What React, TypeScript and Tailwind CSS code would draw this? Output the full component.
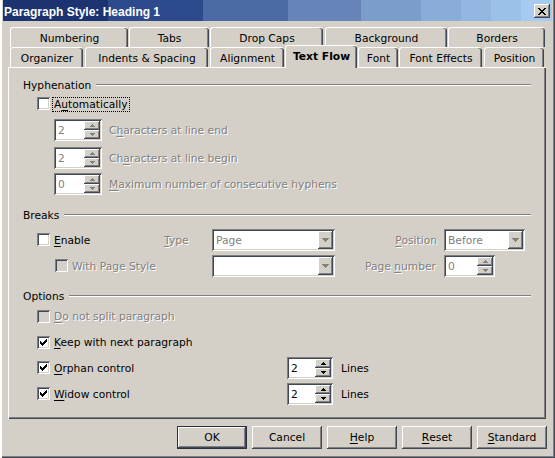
import React from 'react';

const CHECK: [number, number][] = [
  [6, 0], [5, 1], [6, 1], [0, 2], [4, 2], [5, 2], [6, 2], [0, 3], [1, 3], [3, 3], [4, 3], [5, 3],
  [0, 4], [1, 4], [2, 4], [3, 4], [4, 4], [1, 5], [2, 5], [3, 5], [2, 6],
];

const CLOSE: [number, number][] = [
  [0, 0], [1, 0], [6, 0], [7, 0], [1, 1], [2, 1], [5, 1], [6, 1], [2, 2], [3, 2], [4, 2], [5, 2],
  [3, 3], [4, 3], [2, 4], [3, 4], [4, 4], [5, 4], [1, 5], [2, 5], [5, 5], [6, 5], [0, 6], [1, 6], [6, 6], [7, 6],
];

const Pixels = ({ dots, w, h, color = '#000' }: { dots: [number, number][]; w: number; h: number; color?: string }) => (
  <svg width={w} height={h} viewBox={`0 0 ${w} ${h}`} shapeRendering="crispEdges">
    {dots.map(([x, y]) => (
      <rect key={`${x}-${y}`} x={x} y={y} width={1} height={1} fill={color} />
    ))}
  </svg>
);

const U = ({ children }: { children: React.ReactNode }) => (
  <span className="underline underline-offset-[2px]">{children}</span>
);

const raised = 'shadow-[inset_-1px_-1px_0_#404858,inset_1px_1px_0_#fff,inset_-2px_-2px_0_#808080]';
const sunken = 'shadow-[inset_1px_1px_0_#808080,inset_-1px_-1px_0_#fff,inset_2px_2px_0_#404858,inset_-2px_-2px_0_#d4d0c8]';
const dim = 'text-[#808080] [text-shadow:1px_1px_0_#fff]';
// labels sit a pixel lower than the flex centre would put them
const lbl = 'pt-[2px]';

const CheckBox = ({ checked = false, disabled = false }: { checked?: boolean; disabled?: boolean }) => (
  <span
    className={`flex h-[13px] w-[13px] shrink-0 items-center justify-center ${disabled ? 'bg-[#d4d0c8]' : 'bg-white'} ${sunken}`}
  >
    {checked && <Pixels dots={CHECK} w={7} h={7} />}
  </span>
);

const Arrow = ({ up = false, disabled = false }: { up?: boolean; disabled?: boolean }) => (
  <svg width="5" height="3" viewBox="0 0 5 3" shapeRendering="crispEdges">
    <polygon points={up ? '2.5,0 5,3 0,3' : '0,0 5,0 2.5,3'} fill={disabled ? '#808080' : '#000'} />
  </svg>
);

const Spin = ({ value, width, disabled = false }: { value: string; width: string; disabled?: boolean }) => (
  <div className={`flex h-[22px] shrink-0 bg-white ${width} ${sunken}`}>
    <span className={`flex-1 pl-[4px] pt-[1px] leading-[21px] ${disabled ? 'text-[#808080]' : 'text-black'}`}>{value}</span>
    <div className="my-[2px] mr-[2px] flex w-[16px] flex-col">
      <span className={`flex flex-1 items-center justify-center bg-[#d4d0c8] ${raised}`}>
        <Arrow up disabled={disabled} />
      </span>
      <span className={`flex flex-1 items-center justify-center bg-[#d4d0c8] ${raised}`}>
        <Arrow disabled={disabled} />
      </span>
    </div>
  </div>
);

const Combo = ({ value, width }: { value: string; width: string }) => (
  <div className={`flex h-[22px] shrink-0 bg-white ${width} ${sunken}`}>
    <span className="flex-1 pl-[4px] pt-[1px] leading-[21px] text-[#808080]">{value}</span>
    <span className={`my-[2px] mr-[2px] flex w-[15px] items-center justify-center bg-[#d4d0c8] ${raised}`}>
      <svg width="7" height="4" viewBox="0 0 7 4" shapeRendering="crispEdges">
        <polygon points="0,0 7,0 3.5,4" fill="#808080" />
      </svg>
    </span>
  </div>
);

const Header = ({ label, className = '' }: { label: string; className?: string }) => (
  <div className={`flex h-[18px] items-center ${className}`}>
    <span className={lbl}>{label}</span>
    <div className="ml-[5px] h-[2px] flex-1 border-t border-b border-t-[#808080] border-b-white" />
  </div>
);

const Tab = ({ label, width, className = '', active = false }: { label: string; width: string; className?: string; active?: boolean }) => (
  <div
    className={`flex shrink-0 items-center justify-center rounded-t-[3px] border-t border-l border-white bg-[#d4d0c8] shadow-[inset_-1px_0_0_#404858,inset_-2px_0_0_#808080] ${width} ${
      active ? 'relative z-10 -mt-[2px] h-[23px] self-start pt-[1px] font-bold' : 'h-[20px] pt-[4px]'
    } ${className}`}
  >
    {label}
  </div>
);

const Button = ({ children, primary = false }: { children: React.ReactNode; primary?: boolean }) => (
  <div
    className={`flex h-[23px] w-[70px] items-center justify-center bg-[#d4d0c8] pt-[2px] ${
      primary
        ? 'border border-[#283040] shadow-[inset_-1px_-1px_0_#404858,inset_1px_1px_0_#fff,inset_-2px_-2px_0_#808080]'
        : raised
    }`}
  >
    {children}
  </div>
);

export default function App() {
  return (
    <div className="flex h-[458px] w-[555px] flex-col overflow-hidden bg-[#d4d0c8] font-['DejaVu_Sans',sans-serif] text-[10.7px] text-black shadow-[inset_2px_0_0_#fff,inset_1px_0_0_#d4d0c8,inset_-1px_-1px_0_#404858,inset_-2px_-2px_0_#808080]">
      {/* Title bar */}
      <div className="mx-[3px] flex h-[21px] shrink-0 items-start bg-[linear-gradient(90deg,#1b3371_0px,#1b3371_105px,#2d4b8c_105px,#2d4b8c_200px,#4c6ba6_200px,#4c6ba6_285px,#6784b8_285px,#6784b8_358px,#7b9dcb_358px,#7b9dcb_418px,#89acd8_418px,#89acd8_458px,#93b7e0_458px,#93b7e0_488px,#9cc1e8_488px,#9cc1e8_518px,#a6caf0_518px)]">
        <span className="flex-1 pl-[1px] pt-[5px] font-['Liberation_Sans',Arial,sans-serif] text-[12px] font-bold leading-[14px] text-white">
          Paragraph Style: Heading 1
        </span>
        <span className={`mr-[2px] mt-[4px] flex h-[14px] w-[16px] items-center justify-center bg-[#d4d0c8] ${raised}`}>
          <Pixels dots={CLOSE} w={8} h={7} />
        </span>
      </div>

      {/* Tabs */}
      <div className="ml-[10px] flex flex-col pt-[6px]">
        <div className="flex h-[20px]">
          <Tab label="Numbering" width="w-[118px]" />
          <Tab label="Tabs" width="w-[80px]" className="ml-[1px]" />
          <Tab label="Drop Caps" width="w-[113px]" className="ml-[1px]" />
          <Tab label="Background" width="w-[122px]" className="ml-[2px]" />
          <Tab label="Borders" width="w-[97px]" className="ml-[1px]" />
        </div>
        <div className="flex h-[20px]">
          <Tab label="Organizer" width="w-[73px]" />
          <Tab label="Indents & Spacing" width="w-[123px]" className="ml-[2px]" />
          <Tab label="Alignment" width="w-[74px]" className="ml-[2px]" />
          <Tab label="Text Flow" width="w-[72px]" className="ml-[1px]" active />
          <Tab label="Font" width="w-[40px]" className="ml-[1px]" />
          <Tab label="Font Effects" width="w-[83px]" className="ml-[1px]" />
          <Tab label="Position" width="w-[60px]" className="ml-[2px]" />
        </div>
      </div>

      {/* Panel */}
      <div className="ml-[8px] flex h-[352px] w-[538px] shrink-0 flex-col border-t border-l border-white pl-[14px] pr-[15px] pt-[8px] shadow-[inset_-1px_-1px_0_#404858,inset_-2px_-2px_0_#808080]">
        <Header label="Hyphenation" />
        <div className="ml-[14px] flex h-[18px] items-center">
          <CheckBox />
          <span className="ml-[2px] mt-[2px] border border-dotted border-black px-[1px] leading-[13px]">
            A<U>u</U>tomatically
          </span>
        </div>
        <div className="ml-[31px] mt-[7px] flex h-[22px] items-center">
          <Spin value="2" width="w-[48px]" disabled />
          <span className={`ml-[7px] ${lbl} ${dim}`}>
            C<U>h</U>aracters at line end
          </span>
        </div>
        <div className="ml-[31px] mt-[6px] flex h-[22px] items-center">
          <Spin value="2" width="w-[48px]" disabled />
          <span className={`ml-[7px] ${lbl} ${dim}`}>
            Ch<U>a</U>racters at line begin
          </span>
        </div>
        <div className="ml-[31px] mt-[4px] flex h-[22px] items-center">
          <Spin value="0" width="w-[48px]" disabled />
          <span className={`ml-[7px] ${lbl} ${dim}`}>
            <U>M</U>aximum number of consecutive hyphens
          </span>
        </div>

        <Header label="Breaks" className="mt-[11px]" />
        <div className="ml-[14px] mt-[5px] flex h-[22px] items-center">
          <div className="flex w-[127px] items-center">
            <CheckBox />
            <span className={`ml-[4px] ${lbl}`}>
              <U>E</U>nable
            </span>
          </div>
          <span className={`w-[48px] ${lbl} ${dim}`}>
            <U>T</U>ype
          </span>
          <Combo value="Page" width="w-[123px]" />
          <span className={`w-[109px] pr-[7px] text-right ${lbl} ${dim}`}>
            <U>P</U>osition
          </span>
          <Combo value="Before" width="w-[81px]" />
        </div>
        <div className="ml-[32px] mt-[4px] flex h-[22px] items-center">
          <div className="flex w-[157px] items-center">
            <CheckBox disabled />
            <span className={`ml-[4px] ${lbl} ${dim}`}>With Page Style</span>
          </div>
          <Combo value="" width="w-[123px]" />
          <span className={`w-[109px] pr-[8px] text-right ${lbl} ${dim}`}>
            Page <U>n</U>umber
          </span>
          <Spin value="0" width="w-[51px]" disabled />
        </div>

        <Header label="Options" className="mt-[10px]" />
        <div className="ml-[14px] flex h-[22px] items-center">
          <CheckBox disabled />
          <span className={`ml-[4px] ${lbl} ${dim}`}>
            <U>D</U>o not split paragraph
          </span>
        </div>
        <div className="ml-[14px] mt-[4px] flex h-[22px] items-center">
          <CheckBox checked />
          <span className={`ml-[4px] ${lbl}`}>
            <U>K</U>eep with next paragraph
          </span>
        </div>
        <div className="ml-[14px] mt-[4px] flex h-[22px] items-center">
          <div className="flex w-[250px] items-center">
            <CheckBox checked />
            <span className={`ml-[4px] ${lbl}`}>
              <U>O</U>rphan control
            </span>
          </div>
          <Spin value="2" width="w-[46px]" />
          <span className={`ml-[8px] ${lbl}`}>Lines</span>
        </div>
        <div className="ml-[14px] mt-[4px] flex h-[22px] items-center">
          <div className="flex w-[250px] items-center">
            <CheckBox checked />
            <span className={`ml-[4px] ${lbl}`}>
              <U>W</U>idow control
            </span>
          </div>
          <Spin value="2" width="w-[46px]" />
          <span className={`ml-[8px] ${lbl}`}>Lines</span>
        </div>
      </div>

      {/* Buttons */}
      <div className="mt-[7px] flex justify-end gap-[5px] pr-[8px]">
        <Button primary>OK</Button>
        <Button>Cancel</Button>
        <Button>
          <U>H</U>elp
        </Button>
        <Button>
          <U>R</U>eset
        </Button>
        <Button>
          <U>S</U>tandard
        </Button>
      </div>
    </div>
  );
}
